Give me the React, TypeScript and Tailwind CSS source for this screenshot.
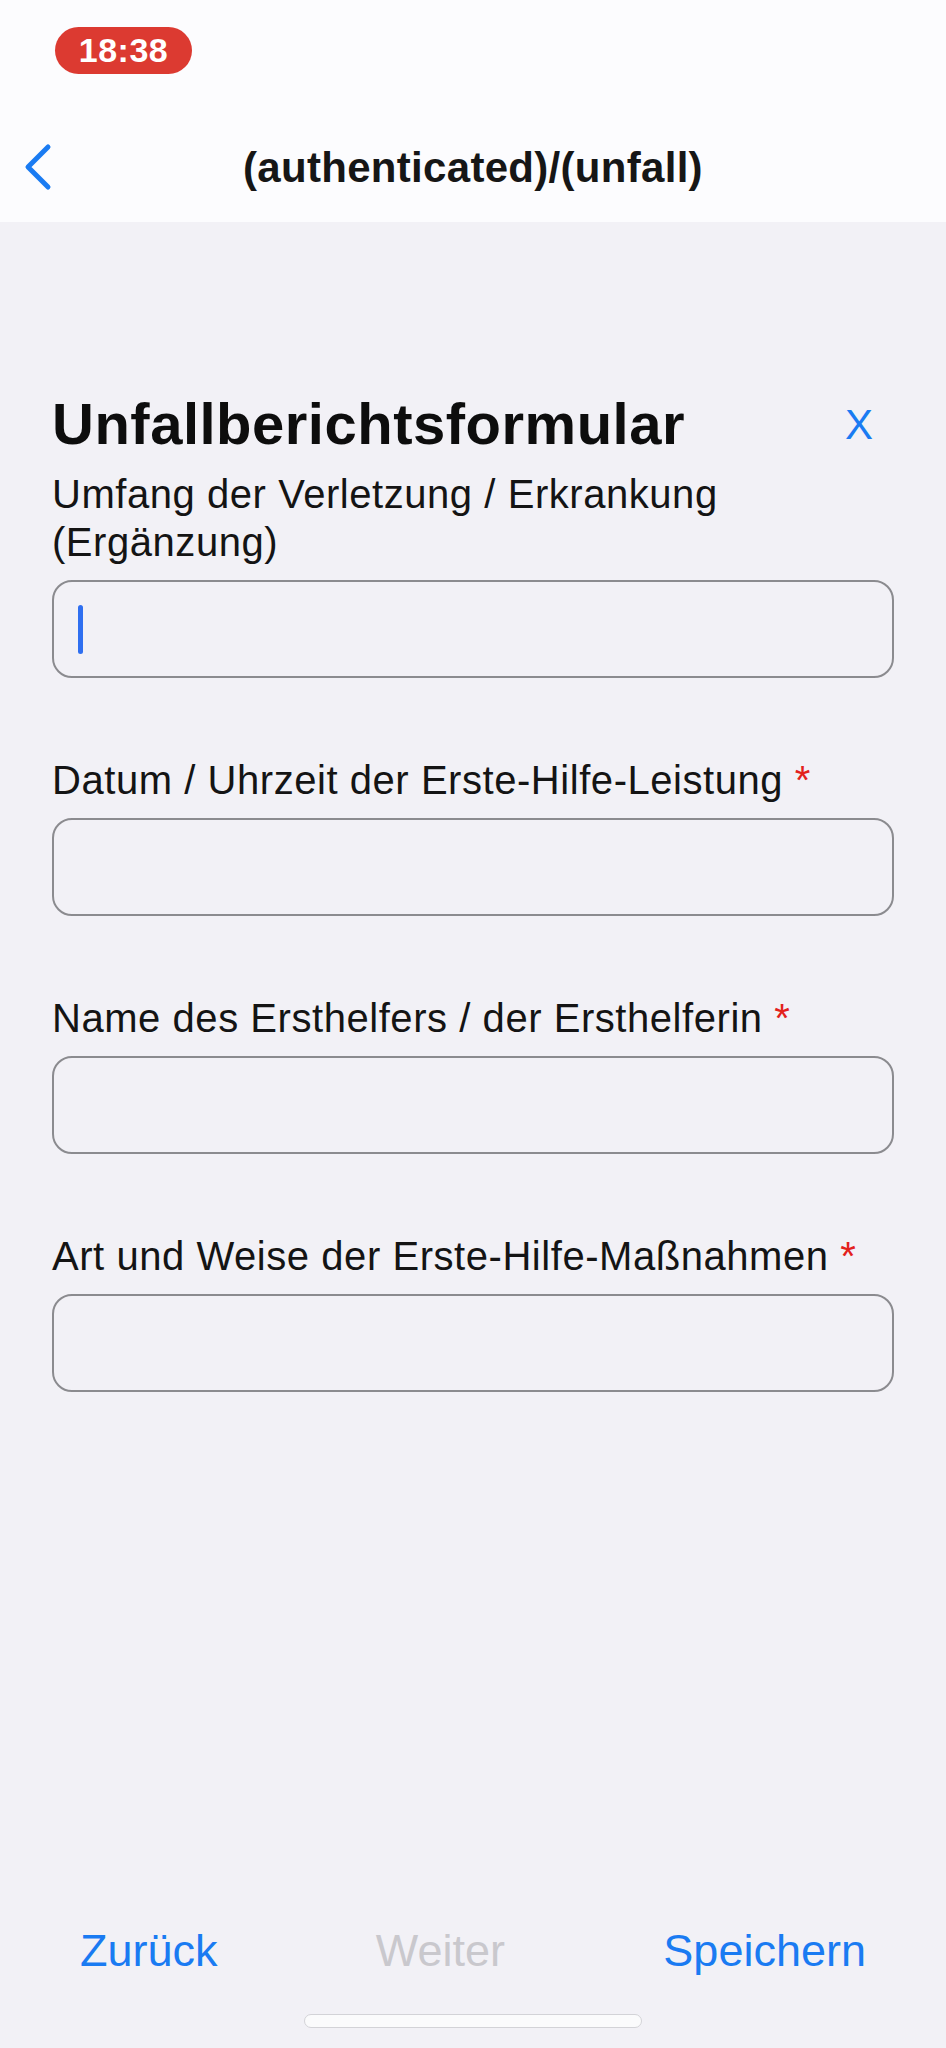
const fields = [
  { label: 'Umfang der Verletzung / Erkrankung (Ergänzung)', required: false, focused: true },
  { label: 'Datum / Uhrzeit der Erste-Hilfe-Leistung', required: true, focused: false },
  { label: 'Name des Ersthelfers / der Ersthelferin', required: true, focused: false },
  { label: 'Art und Weise der Erste-Hilfe-Maßnahmen', required: true, focused: false },
];

function Field({ label, required, focused }: { label: string; required: boolean; focused: boolean }) {
  return (
    <div className="flex flex-col">
      <p className="text-[40px] leading-[48px] tracking-[0.55px] text-[#141414]">
        {label}
        {required && <span className="text-[#e3211c]"> *</span>}
      </p>
      <div className="mt-[14px] h-[98px] rounded-[20px] border-2 border-[#8b8b8f] flex items-center px-[24px]">
        {focused && <div className="w-[5px] h-[49px] rounded-full bg-[#2f6ff0]" />}
      </div>
    </div>
  );
}

export default function App() {
  return (
    <div
      className="w-[946px] h-[2048px] bg-[#f2f1f6] flex flex-col"
      style={{ fontFamily: '"Liberation Sans", Arial, sans-serif' }}
    >
      {/* status + nav */}
      <header className="h-[222px] bg-[#fcfcfe] flex flex-col">
        <div className="pt-[27px] pl-[55px]">
          <div className="w-[137px] h-[47px] rounded-full bg-[#dc3a31] flex items-center justify-center">
            <span className="text-white text-[34px] font-semibold tracking-[0.5px]">18:38</span>
          </div>
        </div>
        <div className="mt-[53px] h-[80px] grid grid-cols-[1fr_auto_1fr] items-center">
          <div className="pl-[24px]">
            <svg width="30" height="48" viewBox="0 0 30 48" fill="none">
              <polyline
                points="24,4 4,24 24,44"
                stroke="#1a7bf2"
                strokeWidth="5"
                strokeLinecap="round"
                strokeLinejoin="round"
              />
            </svg>
          </div>
          <h1 className="text-[42px] font-bold text-[#161616] tracking-[0.3px]">(authenticated)/(unfall)</h1>
          <div />
        </div>
      </header>

      <main className="flex-1 px-[52px] pt-[169px]">
        <div className="flex items-center justify-between">
          <h2 className="text-[58px] leading-[64px] font-bold tracking-[0.5px] text-[#0d0d0d]">
            Unfallberichtsformular
          </h2>
          <button className="text-[42px] text-[#1a7bf2] pr-[21px] pt-[2px]">X</button>
        </div>
        <div className="mt-[14px] flex flex-col gap-[78px]">
          {fields.map((f) => (
            <Field key={f.label} {...f} />
          ))}
        </div>
      </main>

      <footer className="flex flex-col items-center">
        <div className="w-full flex justify-between px-[80px] text-[45px] leading-[54px]">
          <button className="text-[#1a7bf2]">Zurück</button>
          <button className="text-[#c9c8cd]">Weiter</button>
          <button className="text-[#1a7bf2]">Speichern</button>
        </div>
        <div className="mt-[36px] mb-[20px] w-[338px] h-[14px] rounded-full bg-[#fbfbfc] border border-[#d3d3d7]" />
      </footer>
    </div>
  );
}
